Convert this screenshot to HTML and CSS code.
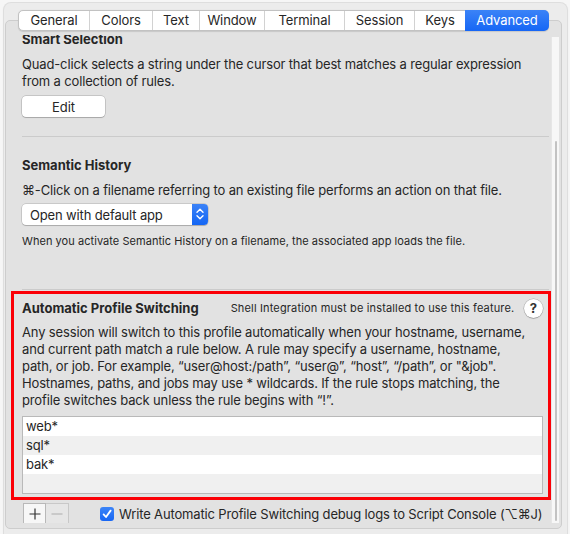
FILE: index.html
```html
<!DOCTYPE html>
<html>
<head>
<meta charset="utf-8">
<link rel="stylesheet" href="styles.css">
</head>
<body>
<div class="window">
  <div class="tabs">
    <div class="tab t-general">General</div>
    <div class="tab t-colors">Colors</div>
    <div class="tab t-text">Text</div>
    <div class="tab t-window">Window</div>
    <div class="tab t-terminal">Terminal</div>
    <div class="tab t-session">Session</div>
    <div class="tab t-keys">Keys</div>
    <div class="tab t-adv selected">Advanced</div>
  </div>
  <div class="pane">
    <div class="viewport">
      <div class="content">
        <section class="sec sec-smart">
          <h3 class="title">Smart Selection</h3>
          <p class="para">Quad-click selects a string under the cursor that best matches a regular expression<br>from a collection of rules.</p>
          <div class="btn-edit">Edit</div>
        </section>
        <hr class="sep">
        <section class="sec sec-sem">
          <h3 class="title">Semantic History</h3>
          <p class="para">⌘-Click on a filename referring to an existing file performs an action on that file.</p>
          <div class="popup">
            <span class="popup-label">Open with default app</span>
            <span class="stepper">
              <svg width="16" height="20" viewBox="0 0 16 20"><path d="M5 8.2 L8 5.2 L11 8.2" fill="none" stroke="#fff" stroke-width="1.4" stroke-linecap="round" stroke-linejoin="round"/><path d="M5 11.8 L8 14.8 L11 11.8" fill="none" stroke="#fff" stroke-width="1.4" stroke-linecap="round" stroke-linejoin="round"/></svg>
            </span>
          </div>
          <p class="small">When you activate Semantic History on a filename, the associated app loads the file.</p>
        </section>
        <hr class="sep sep2">
        <section class="sec sec-aps">
          <div class="aps-head">
            <h3 class="title">Automatic Profile Switching</h3>
            <span class="small note">Shell Integration must be installed to use this feature.</span>
            <span class="help">?</span>
          </div>
          <p class="para aps-para">Any session will switch to this profile automatically when your hostname, username,<br>and current path match a rule below. A rule may specify a username, hostname,<br>path, or job. For example, “user@host:/path”, “user@”, “host”, “/path”, or "&amp;job".<br>Hostnames, paths, and jobs may use * wildcards. If the rule stops matching, the<br>profile switches back unless the rule begins with “!”.</p>
          <div class="table">
            <div class="row">web*</div>
            <div class="row alt">sql*</div>
            <div class="row">bak*</div>
            <div class="row alt"></div>
          </div>
        </section>
        <div class="bottom">
          <div class="pm">
            <span class="pm-btn plus"><svg width="12" height="12" viewBox="0 0 12 12"><path d="M6 0.5V11.5M0.5 6H11.5" stroke="#333" stroke-width="1.2"/></svg></span>
            <span class="pm-btn minus"><svg width="12" height="12" viewBox="0 0 12 12"><path d="M0.5 6H11.5" stroke="#b5b5b5" stroke-width="1.2"/></svg></span>
          </div>
          <label class="check">
            <span class="box"><svg width="14" height="14" viewBox="0 0 14 14"><path d="M3.6 7.4 L6 10 L10.6 3.6" fill="none" stroke="#fff" stroke-width="1.8" stroke-linecap="round" stroke-linejoin="round"/></svg></span>
            <span class="check-label">Write Automatic Profile Switching debug logs to Script Console (⌥⌘J)</span>
          </label>
        </div>
      </div>
    </div>
    <div class="scrollbar"><div class="thumb"></div></div>
  </div>
</div>
</body>
</html>
```
FILE: styles.css
```css
* { box-sizing: border-box; }
html, body { margin: 0; padding: 0; }
body {
  width: 570px;
  height: 534px;
  background: #f6f6f6;
  font-family: Inter, "Liberation Sans", sans-serif;
  font-size: 13px;
  color: #262626;
  overflow: hidden;
}
.window {
  margin: 3px 3px 0 4px;
  height: 540px;
  background: #ececec;
  border-radius: 7px;
  box-shadow: 0 0 0 1px #dedede, 0 1px 3px rgba(0,0,0,0.08);
  padding: 7px 5px 0 1px;
  display: flex;
  flex-direction: column;
}
.tabs {
  align-self: flex-start;
  margin-left: 13px;
  display: flex;
  height: 21px;
  background: #fff;
  border: 1px solid #c2c2c2;
  border-radius: 5px;
  position: relative;
  z-index: 2;
  margin-bottom: -11px;
  box-shadow: 0 0.5px 1px rgba(0,0,0,0.12);
}
.tab {
  display: flex;
  align-items: center;
  justify-content: center;
  line-height: 19px;
  border-left: 1px solid #d2d2d2;
  color: #262626;
  letter-spacing: -0.1px;
}
.tab:first-child { border-left: 0; }
.t-general { width: 70px; }
.t-colors { width: 63px; }
.t-text { width: 47px; }
.t-window { width: 65px; }
.t-terminal { width: 80px; }
.t-session { width: 70px; }
.t-keys { width: 51px; }
.t-adv { width: 84px; }
.tab.selected {
  background: linear-gradient(#3b83f7, #1666f5);
  color: #fff;
  border-left: 0;
  margin: -1px -1px -1px 0;
  border-radius: 0 5px 5px 0;
  line-height: 21px;
}
.pane {
  height: 509px;
  background: #e2e2e2;
  border: 1px solid #cdcdcd;
  border-radius: 5px;
  display: flex;
  padding: 13px 2px 5px 0;
}
.viewport {
  flex: 1;
  overflow-x: visible;
  overflow-y: clip;
  margin-top: 1px;
}
.content {
  margin-top: -4px;
  padding: 0 0 0 16px;
}
.scrollbar {
  width: 13px;
  background: #f7f7f7;
  border-left: 1px solid #e6e6e6;
  margin-top: 3px;
  padding: 104px 2px 0 3px;
  position: relative;
  z-index: 3;
}
.thumb {
  height: 380px;
  background: #c2c2c2;
  border-radius: 4px;
}
.title {
  margin: 0;
  font-size: 13px;
  font-weight: 700;
  line-height: 16px;
  color: #262626;
}
.para {
  margin: 0;
  line-height: 17px;
  white-space: nowrap;
  letter-spacing: -0.15px;
}
.sec-smart .para { margin-top: 9px; }
.btn-edit {
  margin-top: 6px;
  width: 83px;
  height: 21px;
  background: #fff;
  border-radius: 4px;
  box-shadow: 0 0 0 0.5px rgba(0,0,0,0.25), 0 1px 1px rgba(0,0,0,0.15);
  display: flex;
  align-items: center;
  justify-content: center;
  line-height: 16px;
}
.sep {
  border: 0;
  border-top: 1px solid #cbcbcb;
  margin: 19px 2px 0 0;
  height: 0;
}
.sec-sem { padding-top: 20px; }
.sec-sem .para { margin-top: 9px; }
.popup {
  margin-top: 5px;
  width: 186px;
  height: 21px;
  background: #fff;
  border-radius: 4px;
  box-shadow: 0 0 0 0.5px rgba(0,0,0,0.22), 0 1px 1px rgba(0,0,0,0.15);
  display: flex;
  align-items: center;
  justify-content: space-between;
}
.popup-label { padding-left: 8px; line-height: 16px; letter-spacing: -0.15px; }
.stepper {
  width: 16px;
  height: 21px;
  background: linear-gradient(#3a82f7, #1466f4);
  border-radius: 0 4px 4px 0;
  display: flex;
}
.small {
  font-size: 11px;
  line-height: 14px;
  letter-spacing: 0.05px;
}
.sec-sem .small { margin: 9px 0 0; }
.sep2 { margin-top: 41px; }
.sec-aps {
  margin: 1px 0 0 -11px;
  width: 540px;
  border: 3px solid #fb0006;
  padding: 4px 5px 3px 8px;
  position: relative;
  z-index: 4;
}
.aps-head {
  display: flex;
  align-items: center;
  height: 20px;
}
.note { margin-left: 32px; letter-spacing: 0.15px; }
.help {
  margin-left: auto;
  width: 19px;
  height: 19px;
  border-radius: 50%;
  background: #fff;
  box-shadow: 0 0 0 0.5px rgba(0,0,0,0.25), 0 1px 1px rgba(0,0,0,0.15);
  display: flex;
  align-items: center;
  justify-content: center;
  font-weight: 700;
  font-size: 13px;
  color: #333;
  margin-right: 0;
}
.aps-para { margin-top: 6px; }
.table {
  margin-top: 7px;
  width: 521px;
  border: 1px solid #b9b9b9;
  background: #fff;
}
.row {
  height: 19px;
  line-height: 19px;
  padding-left: 3px;
  background: #fff;
  letter-spacing: -0.15px;
}
.row.alt { background: #f0f0f0; }
.bottom {
  display: flex;
  align-items: center;
  margin-top: 3px;
  height: 22px;
}
.pm {
  display: flex;
  margin-left: 1px;
}
.pm-btn {
  width: 23px;
  height: 22px;
  display: flex;
  align-items: center;
  justify-content: center;
  border: 1px solid #b8b8b8;
}
.pm-btn.plus { background: #f7f7f7; }
.pm-btn.minus { background: #e6e6e6; border-left: 0; border-color: #c8c8c8; }
.check {
  display: flex;
  align-items: center;
  margin-left: 31px;
}
.box {
  width: 14px;
  height: 14px;
  border-radius: 3px;
  background: linear-gradient(#3c84f7, #1766f4);
  display: flex;
  flex: none;
}
.check-label { margin-left: 5px; white-space: nowrap; letter-spacing: -0.15px; }
```
